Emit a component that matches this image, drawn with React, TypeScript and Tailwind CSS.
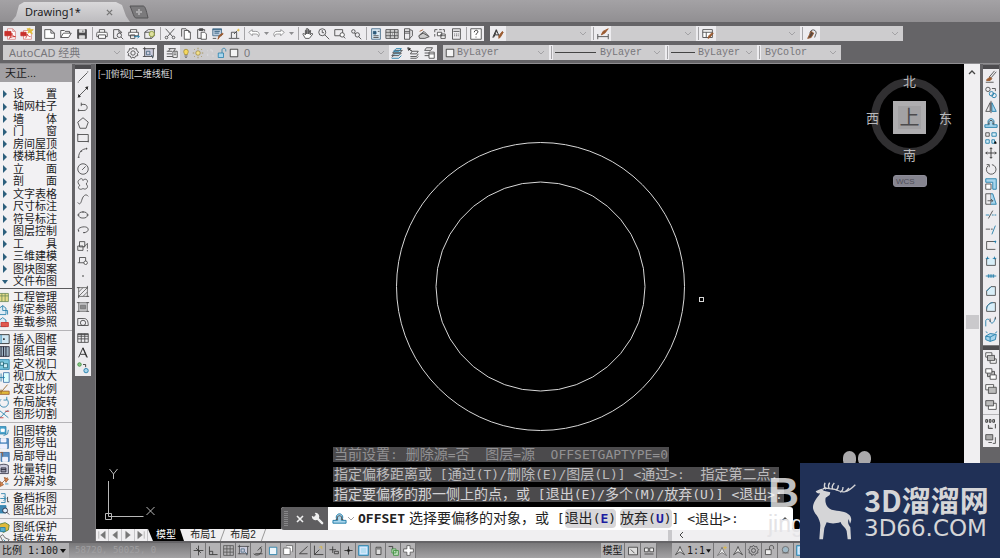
import type { ReactNode } from 'react'

// [path, stroke, fill]
type Shape = [string, string, string?]

const K = '#4a4a4c'
const B = '#1f7ba8'
const L = '#a8d5ec'
const R = '#c9302c'
const O = '#9a5a30'
const Y = '#e0b93a'
const N = 'none'

const ICONS: Record<string, Shape[]> = {
  pdf: [['M4 2h6l3 3v9H4zM10 2v3h3', '#d98a88', '#fff'], ['M1 5h7v5H1z', R, R], ['M6 13c2-2 3-4 3-6 0 3 2 4 4 4-2 0-5 0-7 2', R]],
  pdfStar: [['M4 4h6l3 3v7H4z', '#d98a88', '#fff'], ['M1 6h6v4H1z', R, R], ['M6 13c2-2 2-3 2-5 1 2 2 3 4 3', R], ['M11 1l1 2 3 0-2 2 1 3-3-2-2 1 1-3-2-2h2z', Y, Y]],
  file: [['M2 3h7l4 4v6H2zM9 3v4h4', K, '#fff']],
  open: [['M2 12V4h4l1 1h5v2M2 12l3-5h9l-3 5z', K, '#fff']],
  save: [['M3 3h10v10H3z', K, K], ['M5 3h6v3H5zM5 10h6v3H5z', '#ddd', '#ddd'], ['M9 4v2', K]],
  print: [['M5 6V3h6v3M3 6h10c1 0 1 1 1 2v3H2V8c0-1 0-2 1-2z', K, '#fff'], ['M4 9h8v4H4z', K, '#fff']],
  preview: [['M3 13V3h6l3 3v1M3 13h4M9 3v3h3', K], ['M7 9.500a2.500 2.500 0 1 0 5 0a2.500 2.500 0 1 0-5 0M11.500 11.500L14 14', K]],
  publish: [['M4 6V3h7v3M2 6h11v4H2zM4 9h5v4H4z', K, '#fff'], ['M8 11h6M12 9l2 2-2 2', B]],
  globe: [['M2 6l4-3h7v7l-3 3H2zM2 6h7v7', K], ['M7 8a3 3 0 1 0 6 0a3 3 0 1 0-6 0', '#8a9a3a', '#dfe0a0']],
  cut: [['M3 2l8 9M13 2L5 11M2.500 12a1.500 1.500 0 1 0 3 0a1.500 1.500 0 1 0-3 0M10.500 12a1.500 1.500 0 1 0 3 0a1.500 1.500 0 1 0-3 0', K]],
  copy: [['M3 11V2h5l2 2', K], ['M6 4h5l2 2v8H6zM11 4v2h2', K, '#fff']],
  paste: [['M8 13H3V3h8v2', K], ['M5 2h4v2H5z', K, K], ['M7 6h4l2 2v6H7z', K, '#fff']],
  match: [['M2 2h10v8H2z', '#4a6f8c', '#bcd'], ['M2 3h10M4 5h6M4 7h5', '#2d5a7a'], ['M14 8l-4 3-2 3 1-4 4-3z', O, O], ['M2 13h4', K]],
  block: [['M5 6h6v7H5zM2 13h3M11 13h3', K, '#eee'], ['M8 8l4-4', K], ['M13 2v3M11.500 3.500h3', Y]],
  undo: [['M2 6l4-3v2h4c3 0 4 2 4 4l-1 2c0-2-1-3-3-3H6v2z', '#8e8e90', '#fff']],
  redo: [['M14 6l-4-3v2H6C3 5 2 7 2 9l1 2c0-2 1-3 3-3h4v2z', '#8e8e90', '#fff']],
  pan: [['M5 13L2 8l1-1 2 2V4h1v4V2h2v6V3h1v5l1-4h1l-.5 5 2-2 1 1-4 5z', K, '#fff']],
  zoomRt: [['M2 6a4 4 0 1 0 8 0a4 4 0 1 0-8 0M6 3.500v3h2M9 9l5 5', K]],
  zoomWin: [['M2 3h9v7H2z', K], ['M8 9a2.500 2.500 0 1 0 5 0a2.500 2.500 0 1 0-5 0', K, '#fff'], ['M12 11l2 2', K]],
  zoomPrev: [['M3 5a2 2 0 1 0 4 0a2 2 0 1 0-4 0M7 9a2.500 2.500 0 1 0 5 0a2.500 2.500 0 1 0-5 0M6 7l2 1M11 11l3 3', K]],
  props: [['M3 2h10v12H3z', '#456c88', '#dcebf5'], ['M5 5h3v3H5z', '#2d5a7a', '#2d5a7a'], ['M10 5h2M5 10h6M5 12h6', K]],
  center: [['M1 3h14v10H1zM6 3v10M11 3v10M1 6h14M1 10h14M3 8h1M8 8h1M13 8h1', K, '#ddd']],
  palette: [['M4 2h6v12H4zM10 3l3 1v6l-3 3M4 5h6M4 7h6', K]],
  sheet: [['M2 10l5-3 7 4-5 2H3zM3 9l5-4 5 5', K, '#ccc'], ['M3 5l4-2', O]],
  markup: [['M2 3h3M7 3h3M2 3v3M2 8v3M13 6V3h-2', K], ['M5 6h5v4H5zM9 8h5v5H9z', K, '#fff'], ['M9 10h5', K]],
  calc: [['M4 2h9v12H4zM5 5h7M6 8h1M8 8h1M10 8h1M6 10h1M8 10h1M10 10h1', K]],
  help: [['M2 2h12v12H2z', K, '#fff'], ['M6 6c0-3 5-3 4 0 0 1-2 1-2 3M8 11v1', '#222']],
  textStyle: [['M2 12L6 3l4 9M4 9h4', '#222'], ['M3 12L6.500 4', '#222'], ['M14 6l-3 5-2 2v-3l4-5z', O, O]],
  dimStyle: [['M2 8v6M14 8v6M2 11h12', K], ['M14 2l-4 5-4 2 2-4z', O, O]],
  tableStyle: [['M2 3h11v9H2zM2 6h11M6 6v6', K, '#fff'], ['M14 7l-4 5-2 1 1-3 3-3z', O, O]],
  leader: [['M6 8a3.500 3.500 0 1 1 6 1l-1 3', K], ['M7 5l-4 8 4-1 3-5z', O, '#5b4a40']],
  gear: [['M8 1.500l1.500 2 2.500-.5.500 2.500 2 1.500-1.500 1.500.5 2.500-2.500.5L9.500 14 8 12.500 6 14l-1-2.500-2.500-.5.500-2.500L1.500 7l2-1.500L4 3l2.500.5z', K], ['M5.500 8a2.500 2.500 0 1 0 5 0a2.500 2.500 0 1 0-5 0', K]],
  workspace: [['M3 3h10v9H3zM1 3h3M12 3h3M3 1v3M1 12h3M12 14v-3', K, '#ccd'], ['M5 6h4v4H5zM10 10l3 3', '#4a6a80']],
  layers: [['M2 12h7M2 9h6M2 6h6M4 3h8l-2 3M4 6l2-3', K], ['M9 6h5v7H9zM10 8h3M10 10h3', K, '#fff']],
  bulb: [['M5 6a3 3 0 1 1 6 0c0 2-1 2-1 4H6c0-2-1-2-1-4', '#a08a30', '#f5d75c'], ['M6 12h4M7 14h2', K]],
  sun: [['M5 8a3 3 0 1 0 6 0a3 3 0 1 0-6 0M8 1v2M8 13v2M1 8h2M13 8h2M3 3l1 1M12 12l1 1M3 13l1-1M12 4l1-1', '#998540', '#f3e08a']],
  freeze: [['M8 4h3v3M5 9v3M4 5h1M11 12h2', '#e0e0e4']],
  lock: [['M3 8h7v6H3z', B, L], ['M8 8V4c0-3 5-3 5 0v2', B]],
  swatch: [['M3 3h10v10H3z', '#222', '#f4f4f4']],
  layCur: [['M2 11l3-3h8l-3 3zM2 13l3-3M3 8l3-3h8l-3 3z', K, L], ['M4 6l3-3h6l-3 3zM2 14h8l3-3', B]],
  layPrev: [['M2 2l3 1-2 2zM4 4l3 2', '#111'], ['M5 9l2-3h7l-2 3zM5 12h7l2-3M5 14h7l2-2', K]],
  layState: [['M3 5l2-3h7l-2 3zM3 8h6M3 11h5', K], ['M8 7h6v7H8zM8 9h6', K, '#fff']],
  line: [['M3 13L13 3M2 14h1M13 2h1', K]],
  xline: [['M2 14L14 2', K], ['M3 11l2 2-2 1zM11 3l2 2 0-3z', '#222', '#222']],
  pline: [['M2 12h7c5 0 5-7 0-7H6M6 3v4M3 10v3', K]],
  polygon: [['M8 2l6 5-2.500 7h-7L2 7z', K]],
  rect: [['M2 4h12v8H2zM2 3v2M14 11v2', K]],
  arc: [['M3 13C3 7 7 3 13 3M2 13h2M12 2v2M5 6h2', K]],
  circle: [['M2 8a6 6 0 1 0 12 0a6 6 0 1 0-12 0M7 9l4-4', K]],
  cloud: [['M4 3c2-2 4-1 4 1 2-3 6-1 5 2-2 1-1 3 0 4 1 3-3 5-5 3-2 2-6 1-5-2 2-1 1-2 0-3-1-2-1-4 1-5', K]],
  spline: [['M2 12c3 4 4-1 5-4s4-7 7-3', K]],
  ellipse: [['M3 8a5 3.500 0 1 0 10 0a5 3.500 0 1 0-10 0M1.500 8h2M12.500 8h2M8 3.500v2', K]],
  ellArc: [['M3 9C0 5 13 2 14 7c0 3-3 4-5 4M8 11h2M3 8v2', K]],
  insert: [['M4 3h6v6H4zM2 8h6v5H2zM9 9l4-4v6', K, '#eee'], ['M13 13v1', '#000']],
  make: [['M4 4h7v6H2M4 4v6', K], ['M9 10a2 2 0 1 0 4 0a2 2 0 1 0-4 0', K, '#fff']],
  point: [['M7.500 7.500h1v1h-1z', '#777', '#777']],
  hatch: [['M3 3h10v10H3zM3 8l5-5M3 13L13 3M8 13l5-5', '#666'], ['M1 3h3M12 13h3M3 12v3M13 1v3', K]],
  gradient: [['M3 3h10v10H3z', '#777', '#c4c4c6'], ['M5 6h6v4H5z', '#777', '#8a8a8c'], ['M1 3h3M12 3h3M1 13h3M12 13h3', K]],
  region: [['M2 12V4h7c3 0 5 2 5 8z', K], ['M5 9a3 3 0 1 0 6 0a3 3 0 1 0-6 0', K]],
  table: [['M2 3h12v10H2zM2 6h12M2 9h12M6 3v10M10 3v10', K], ['M2 4h12', K]],
  mtext: [['M3 13L8 2l5 11M5 9.500h6', '#222'], ['M8 2.500l4.200 10.500', '#222']],
  addSel: [['M2 4a2 2 0 1 0 4 0a2 2 0 1 0-4 0', '#3f8f3f', '#8bc78b'], ['M8 4h3v3', '#333'], ['M9 11a2.500 2.500 0 1 0 5 0a2.500 2.500 0 1 0-5 0', B, L]],
  erase: [['M14 2L8 9M12 1L6 8', K], ['M7 8l2 2-2 2H3l0-1z', O, O], ['M2 14h9', K]],
  copyObj: [['M2 5a2.500 2.500 0 1 0 5 0a2.500 2.500 0 1 0-5 0M9 4h4v3', K], ['M6 10a2.500 2.500 0 1 0 5 0a2.500 2.500 0 1 0-5 0M9 12a2.500 2.500 0 1 0 5 0a2.500 2.500 0 1 0-5 0', B]],
  mirror: [['M7 3v10H2z', K], ['M9 3v10h5z', B, L], ['M8 1v14', K]],
  offset: [['M1 10h5c-3-3-1-7 2-7s5 4 2 7h5v3H1z', B, L], ['M4 9h2c-1-2 0-4 2-4s3 2 2 4h2', K]],
  array: [['M2 2h4v4H2z', K], ['M9 2h5v4H9zM2 10h4v4H2zM9 10h3v4H9z', B, '#d8eef8'], ['M13 12l1 2h-2z', '#000', '#000']],
  move: [['M8 2v12M2 8h12M6.500 3.500L8 2l1.500 1.500M6.500 12.500L8 14l1.500-1.500M3.500 6.500L2 8l1.500 1.500M12.500 6.500L14 8l-1.500 1.500', '#333']],
  rotate: [['M9 3a5.500 5.500 0 1 1-4 1M3 3l3 0v3', K]],
  scale: [['M2 2h12v12h-4V6H2z', B, L], ['M2 8h6v6H2z', K, '#fff']],
  stretch: [['M2 2h6v12H2z', K], ['M8 2l2 0 4 12H8', B, L], ['M4 10h6M8 8l2 2-2 2', K]],
  trim: [['M2 8h4M9 8h2M12 8h2', B], ['M5 12l5-9', K]],
  extend: [['M2 7h5M8 7h2', K], ['M9 13l4-10', B]],
  breakPt: [['M13 4H3v9h10', K], ['M11 4h3M13 3v3', B]],
  breakObj: [['M3 5v8h10V5', K, '#d8eef8'], ['M2 5h4M10 5h4M4 3v3M12 3v3', B]],
  join: [['M2 8h12M5 6v4M7 6v4M9 6v4M11 6v4', B]],
  chamfer: [['M3 13V8l5-5h5v10z', K, '#d8eef8'], ['M3 8l5-5', B]],
  fillet: [['M3 13v-3c0-4 4-7 7-7h3v10z', K, '#d8eef8'], ['M3 10c0-4 4-7 7-7', B]],
  blend: [['M2 13V7c0-3 4-3 5 0s4 4 6-4', B], ['M7 4v4M13 2v3', K]],
  explode: [['M2 7l5-3 7 1-1 6-6 2-5-2zM7 8l6-3M7 8v5M7 8L2 7M4 3l-2-1M13 3l2-1', B, L]],
  front: [['M2 2h7v5H2z', K, '#fff'], ['M7 9h7v5H7z', K, '#fff'], ['M4 5h8v6H4z', K, '#bbb']],
  back: [['M4 5h8v6H4z', K, '#bbb'], ['M2 2h7v5H2zM7 9h7v5H7z', K, '#fff']],
  above: [['M2 3h9v6H2z', K, '#fff'], ['M5 6h9v7H5z', K, '#bbb']],
  under: [['M5 6h9v7H5z', K, '#fff'], ['M2 3h9v6H2z', K, '#bbb']],
  annFront: [['M2 3h2v3H2zM6 3h2v3H6zM10 3h2v3h-2zM5 9v4h5M13 8v5', '#333', '#ccc']],
  hatchBack: [['M2 3h8v6H2z', K, '#aaa'], ['M5 12h4M13 6v7h-3', K]],
  snap: [['M8 2v12M2 8h12M5 5l6 6', '#333']],
  grid: [['M2 2h12v12H2zM6 2v12M10 2v12M2 6h12M2 10h12', '#555']],
  ortho: [['M3 3v10h10M3 9h4v4', '#333']],
  polar: [['M2 12a5 5 0 1 0 8-8M7 8l5-5M4 12h9', '#333']],
  osnap: [['M3 4h9v9H3z', B, '#eef6fb']],
  osnap3: [['M2 5h8v8H2zM5 2h8v8', '#666', '#fff']],
  otrack: [['M13 3L3 12h10', '#333']],
  ducs: [['M3 2v11h11M3 13l6-6', '#333'], ['M9 4l3-1v3', Y]],
  dyn: [['M7 3v8M3 7h8M9 9h5v3H9z', '#333']],
  lwt: [['M8 3v10M3 8h10', '#222'], ['M7 7h2v2H7z', '#222', '#222']],
  tpy: [['M2 2h12v12H2z', B, '#8ecdf0'], ['M4 4h8v8H4z', '#eef', '#b6def3']],
  qp: [['M5 4h6v9H5zM6 6h4', '#333', '#ddd']],
  sc: [['M2 3h5v5', '#333'], ['M6 6h5v5H6zM8 8h6v6H8z', '#3f8f3f', '#bde0bd']],
  am: [['M6 2h4v4h4v4h-4v4H6v-4H2V6h4z', '#555', '#fff']],
  modelSp: [['M2 3h12v10H2zM5 6l5 5', '#333', '#ddd']],
  layoutSp: [['M2 4h5v5H2zM9 4h5v5H9zM2 12h12', '#333', '#eee']],
  annot: [['M8 2l2 5 4 6-6-4-6 4 4-6z', '#333', '#eee']],
  annotAdd: [['M8 3l2 5 4 6-6-4-6 4 4-6z', '#666', '#eee'], ['M12 1v5M9.500 3.500h5', Y]],
  unlock: [['M3 7h7v6H3z', '#444', '#eee'], ['M8 7V4c0-3 5-3 5 0v2', '#444']],
  iso: [['M4 7a4 4 0 1 0 8 0a4 4 0 1 0-8 0M4 11h8', '#666', '#9fb8c6']],
  proj: [['M2 3h12v10H2zM2 6h12M6 3v10M10 3v10', '#6c8a5a', '#e6dc8a']],
  bind: [['M3 13V5l4-3 4 3v8zM7 2v6h6v5', B, '#dcebf5']],
  reload: [['M3 13V5l4-3 4 3v8z', B, '#dcebf5'], ['M5 8h9v5H5z', R, '#e05a50']],
  frame: [['M1 2h14v11H1z', '#222', '#cfe6f2'], ['M8 7h1v1H8z', '#111', '#111'], ['M5 2v11', B]],
  catalog: [['M1 2h14v12H1z', '#223', '#9db1c0'], ['M5 2v12M8 2v12M11 2v12', '#112']],
  viewDef: [['M1 2h14v12H1z', B, '#7cc8de'], ['M4 5h4v4H4zM8 7h5v5H8z', '#267', '#cdeef8']],
  viewUp: [['M8 2h7v12H8z', '#3b6ea5', '#dff'], ['M2 8h7M7 6l2 2-2 2M5 3v10', B]],
  ratio: [['M3 10h12v4H3z', O, Y], ['M13 2L6 10M5 8v5', '#8a5a1a']],
  spin: [['M5 4a5.500 5.500 0 1 0 7 0M12 1v4h-4', B]],
  slice: [['M3 3l11 9M3 12c4-1 6-8 11-9', B], ['M3 12h5M10 4h5', R]],
  convert: [['M1 2h10v9H1z', B, '#4fa6cf'], ['M5 5h4v3H5z', '#fff', '#fff'], ['M8 13l5-2 1-5', B]],
  disk: [['M2 2h12v12H2z', '#3b6ea5', '#5b8fc4'], ['M5 2h6v4H5zM4 9h8v5H4z', '#fff', '#eef']],
  diskPart: [['M5 3h10v11H5z', '#3b6ea5', '#5b8fc4'], ['M7 9h6v5H7z', '#fff', '#eef'], ['M3 3h4v5', O]],
  batch: [['M2 3c4-2 9-2 12 0v10H2z', '#334', '#ccd'], ['M5 6h6v5H5zM5 8h6', '#223', '#99a']],
  split: [['M3 13L13 3', O], ['M4 8l4 4-4 2zM9 3l5 2-3 4z', O, '#e08a50'], ['M10 11h4', B]],
  backup: [['M5 2h5v11H5M4 8h6M8 5l3 3-3 3', B], ['M13 6v6h2', '#333']],
  compare: [['M3 2h8v9H3z', B, '#3f88b4'], ['M7 8a3 3 0 1 0 6 0a3 3 0 1 0-6 0M12 10l3 3', '#223', '#def']],
  protect: [['M3 4l7-2 5 3-1 6-6 3-5-3z', '#4d7a35', Y], ['M4 8h6v5H4z', B, '#59b0cc']],
  plugin: [['M4 4l3-2 3 4 5 2-4 6-4-4z', '#555', '#eee'], ['M8 8l4 4', B]],
}

function Icon({ name, className = 'size-4' }: { name: string; className?: string }) {
  return (
    <svg viewBox="0 0 16 16" className={`shrink-0 ${className}`} aria-hidden="true">
      {ICONS[name].map(([d, stroke, fill], i) => (
        <path key={i} d={d} stroke={stroke} fill={fill ?? N} strokeWidth={1} />
      ))}
    </svg>
  )
}

function Tool({ name, className = 'w-4' }: { name: string; className?: string }) {
  return (
    <button type="button" aria-label={name} className={`flex h-full shrink-0 items-center justify-center ${className}`}>
      <Icon name={name} className="size-[14px]" />
    </button>
  )
}

const Sep = () => <span className="ml-[2px] mr-px h-[13px] w-px shrink-0 bg-[#a5a4a7]" />

const Strip = ({ children }: { children: ReactNode }) => (
  <div className="flex h-full shrink-0 items-center bg-[#edecef]">{children}</div>
)

const Chevron = ({ className = '' }: { className?: string }) => (
  <svg viewBox="0 0 8 5" className={`h-[5px] w-2 ${className}`} aria-hidden="true">
    <path d="M1 1l3 3 3-3" stroke="#a3a2a5" fill="none" />
  </svg>
)

const Caret = () => (
  <svg viewBox="0 0 9 5" className="h-[5px] w-[9px]" aria-hidden="true">
    <path d="M2 1h5L4.500 4z" fill="#8e8e90" />
  </svg>
)

function Combo({ label, value = '', width, text = '', children }: { label: string; value?: string; width: string; text?: string; children?: ReactNode }) {
  return (
    <div className={`relative flex h-full shrink-0 items-center bg-[#cdccce] ${width}`}>
      {children}
      <select aria-label={label} className={`h-full min-w-0 flex-1 appearance-none bg-transparent text-[#77767a] outline-none ${text}`}>
        <option>{value}</option>
      </select>
      <Chevron className="pointer-events-none absolute right-1" />
    </div>
  )
}

const MONO = "font-['Liberation_Mono','Noto_Sans_CJK_SC',monospace] text-[10px]"

function TopTools() {
  const run = (names: string[]) => names.map((n) => <Tool key={n} name={n} />)
  return (
    <div className="flex h-[15px] items-center">
      <div className="ml-[3px] mr-[7px] flex h-full bg-[#edecef]">{run(['pdf', 'pdfStar'])}</div>
      <Strip>
        {run(['file', 'open', 'save'])}
        <Sep />
        {run(['print', 'preview', 'publish', 'globe'])}
        <Sep />
        {run(['cut', 'copy', 'paste', 'match', 'block'])}
        <Sep />
        <Tool name="undo" />
        <Caret />
        <Tool name="redo" />
        <Caret />
        <Sep />
        {run(['pan', 'zoomRt', 'zoomWin', 'zoomPrev'])}
        <Sep />
        {run(['props', 'center', 'palette', 'sheet', 'markup', 'calc'])}
        <Sep />
        <Tool name="help" />
      </Strip>
      <div className="ml-[6px] flex h-full">
        <Strip><Tool name="textStyle" /></Strip>
        <Combo label="文字样式" width="w-[85px]" />
        <Strip><Sep /><Tool name="dimStyle" /></Strip>
        <Combo label="标注样式" width="w-[85px]" />
        <Strip><Sep /><Tool name="tableStyle" /></Strip>
        <Combo label="表格样式" width="w-[84px]" />
        <Strip><Sep /><Tool name="leader" /></Strip>
        <Combo label="多重引线样式" width="w-[83px]" />
      </div>
    </div>
  )
}

function LayerTools() {
  return (
    <div className="flex h-[15px] items-center">
      <div className="ml-[3px] flex h-full">
        <Combo label="工作空间" value="AutoCAD 经典" width="w-[122px]" text="pl-[6px] text-[11px] font-['Noto_Sans','Noto_Sans_CJK_SC',sans-serif]" />
        <Strip><Tool name="gear" /><Tool name="workspace" /></Strip>
      </div>
      <div className="ml-[7px] flex h-full">
        <Strip><Tool name="layers" /></Strip>
        <Combo label="图层" value="0" width="w-[209px]" text="pl-1 text-[11px] font-['Liberation_Sans',sans-serif]">
          {['bulb', 'sun', 'freeze', 'lock', 'swatch'].map((n) => <Icon key={n} name={n} className="size-3" />)}
        </Combo>
        <Strip><Tool name="layCur" /><Tool name="layPrev" /><Tool name="layState" /></Strip>
      </div>
      <div className="ml-[6px] flex h-full">
        <Combo label="颜色" value="ByLayer" width="w-[106px]" text={MONO}>
          <Icon name="swatch" className="mx-px size-3" />
        </Combo>
        <Strip><Sep /></Strip>
        <Combo label="线型" value="ByLayer" width="w-[112px]" text={MONO}>
          <span className="ml-[2px] mr-1 h-px w-[41px] bg-[#444]" />
        </Combo>
        <Strip><Sep /></Strip>
        <Combo label="线宽" value="ByLayer" width="w-[88px]" text={MONO}>
          <span className="ml-[2px] mr-[3px] h-px w-[24px] bg-[#444]" />
        </Combo>
        <Strip><Sep /></Strip>
        <Combo label="打印样式" value="ByColor" width="w-[80px]" text={`pl-1 ${MONO}`} />
      </div>
    </div>
  )
}

const MENU = ['设置', '轴网柱子', '墙体', '门窗', '房间屋顶', '楼梯其他', '立面', '剖面', '文字表格', '尺寸标注', '符号标注', '图层控制', '工具', '三维建模', '图块图案', '文件布图']

const GROUPS: { height: string; items: [string, string][] }[] = [
  { height: 'h-[38px]', items: [['proj', '工程管理'], ['bind', '绑定参照'], ['reload', '重载参照']] },
  { height: 'h-[88px]', items: [['frame', '插入图框'], ['catalog', '图纸目录'], ['viewDef', '定义视口'], ['viewUp', '视口放大'], ['ratio', '改变比例'], ['spin', '布局旋转'], ['slice', '图形切割']] },
  { height: 'h-[63px]', items: [['convert', '旧图转换'], ['disk', '图形导出'], ['diskPart', '局部导出'], ['batch', '批量转旧'], ['split', '分解对象']] },
  { height: 'h-[25px]', items: [['backup', '备档拆图'], ['compare', '图纸比对']] },
  { height: 'h-[25px]', items: [['protect', '图纸保护'], ['plugin', '插件发布']] },
]

function TangentPanel() {
  return (
    <aside className="w-[72px] shrink-0 overflow-hidden bg-[#f2f1f3] text-[11px] leading-none text-[#1c1c1e]">
      <h2 className="h-[18px] bg-[#a2a0a3] pl-[5px] text-[11px] leading-[18px]">天正...</h2>
      <div className="mt-[6px] grid h-[201px] auto-rows-fr border-b border-[#5a5a5c]">
        {MENU.map((m, i) => (
          <button key={m} type="button" className="flex items-center">
            <svg viewBox="0 0 8 8" className="ml-px mr-1 size-2" aria-hidden="true">
              <path d={i === MENU.length - 1 ? 'M1 2h6L4 6z' : 'M2 0v8l4-4z'} fill="#2c5f7c" />
            </svg>
            <span className="flex w-11 justify-between">{[...m].map((c, j) => <span key={j}>{c}</span>)}</span>
          </button>
        ))}
      </div>
      {GROUPS.map((g, i) => (
        <div key={i} className="border-b border-[#b5b4b7] pb-px pt-[2px]">
          <div className={`grid auto-rows-fr ${g.height}`}>
            {g.items.map(([icon, label]) => (
              <button key={label} type="button" className="flex min-h-0 items-center gap-[3px]">
                <Icon name={icon} className="-ml-[3px] size-[13px]" />
                {label}
              </button>
            ))}
          </div>
        </div>
      ))}
    </aside>
  )
}

const DRAW = ['line', 'xline', 'pline', 'polygon', 'rect', 'arc', 'circle', 'cloud', 'spline', 'ellipse', 'ellArc', 'insert', 'make', 'point', 'hatch', 'gradient', 'region', 'table', 'mtext', 'addSel']
const MODIFY = ['erase', 'copyObj', 'mirror', 'offset', 'array', 'move', 'rotate', 'scale', 'stretch', 'trim', 'extend', 'breakPt', 'breakObj', 'join', 'chamfer', 'fillet', 'blend', 'explode']

function VerticalTools({ names, height }: { names: string[]; height: string }) {
  return (
    <div className={`grid auto-rows-fr bg-[#edecef] ${height}`}>
      {names.map((n) => <Tool key={n} name={n} className="min-h-0 w-full" />)}
    </div>
  )
}

const Grip = () => <div className="h-[5px] border-t border-[#7b7a7d] bg-[#4d4c4f]" />

// CAD draws circles as short chords, so the shapes are faceted polygons
const chords = (r: number, n: number) =>
  Array.from({ length: n }, (_, i) => {
    const a = (i / n) * Math.PI * 2
    return `${144.5 + r * Math.cos(a)},${144.5 + r * Math.sin(a)}`
  }).join(' ')

function ViewCube() {
  const side = 'absolute text-[13px] leading-none'
  return (
    <div className="absolute right-[11px] top-[10px] size-[86px] text-[#b9b9bb]">
      <div className="absolute left-1 top-1 size-[78px] rounded-full border-8 border-[#302f31]" />
      <span className={`${side} left-[36px] top-px`}>北</span>
      <span className={`${side} left-[36px] top-[75px]`}>南</span>
      <span className={`${side} -left-px top-[38px]`}>西</span>
      <span className={`${side} left-[72px] top-[38px]`}>东</span>
      <button type="button" className="absolute left-[26px] top-[27px] size-[33px] border-[5px] border-[#aeadaf] bg-[#a3a2a4] text-[20px] leading-none text-[#4c4b4d]">
        <span className="-mx-1 block">上</span>
      </button>
      <button type="button" className="absolute left-[26px] top-[101px] h-3 w-[34px] rounded-[3px] border border-[#8d8c98] bg-[#85848f] pl-[2px] text-left font-['Liberation_Sans',sans-serif] text-[8px] leading-[9px] text-[#4f4e58]">WCS</button>
    </div>
  )
}

// Chinese glyphs are a step larger than the console's latin face
function Mixed({ children }: { children: string }) {
  return children.split(/([\x20-\x7e]+)/).map((part, i) =>
    i % 2 ? <span key={i} className="text-[13px]">{part}</span> : part
  )
}

function CommandLine() {
  const line = 'mb-[5px] h-[15px] w-fit whitespace-pre bg-[#4b4a4c] px-px leading-[15px]'
  return (
    <div className="absolute bottom-[11px] left-[185px] w-[512px] font-['DejaVu_Sans_Mono','Noto_Sans_CJK_SC',monospace] text-[14px]">
      <div className="pl-[52px]">
        <p className={`${line} text-[#929193]`}><Mixed>{'当前设置: 删除源=否  图层=源  OFFSETGAPTYPE=0'}</Mixed></p>
        <p className={`${line} text-[#bcbbbd]`}><Mixed>{'指定偏移距离或 [通过(T)/删除(E)/图层(L)] <通过>:  指定第二点:'}</Mixed></p>
        <p className={`${line} text-[#d4d3d5]`}><Mixed>{'指定要偏移的那一侧上的点，或 [退出(E)/多个(M)/放弃(U)] <退出>:'}</Mixed></p>
      </div>
      <div className="flex h-[23px] items-center overflow-hidden rounded-[3px] bg-white leading-[18px] text-[#222]">
        <div className="flex h-full w-[47px] shrink-0 items-center justify-between bg-[#5f5e60] pl-[3px] pr-1">
          <svg viewBox="0 0 4 16" className="h-4 w-1" aria-hidden="true">
            <path d="M1 0v16M3 0v16" stroke="#b0afb1" strokeDasharray="1 1" />
          </svg>
          <button type="button" aria-label="关闭">
            <svg viewBox="0 0 8 8" className="size-2"><path d="M1 1l6 6M7 1L1 7" stroke="#f0f0f0" strokeWidth="1.600" /></svg>
          </button>
          <button type="button" aria-label="自定义">
            <svg viewBox="0 0 14 14" className="size-[13px]">
              <path d="M5 5l7 7" stroke="#eee" strokeWidth="2.600" strokeLinecap="round" />
              <path d="M4 1a4 4 0 1 1-3 3l2.500 1.500L5.500 3.500z" fill="#eee" />
            </svg>
          </button>
        </div>
        <Icon name="offset" className="ml-1 size-[15px]" />
        <Chevron />
        <div className="ml-[3px] flex shrink-0 items-center whitespace-pre">
          <b className="text-[13px]">OFFSET</b>
          <span className="ml-1"><Mixed>{'选择要偏移的对象，或 ['}</Mixed></span>
          <button type="button" className="rounded-sm bg-[#d8d7d9]">退出<span className="text-[13px]">(<b className="text-[#1c1ca0]">E</b>)</span></button>
          <button type="button" className="ml-1 rounded-sm bg-[#d8d7d9]">放弃<span className="text-[13px]">(<b className="text-[#1c1ca0]">U</b>)</span></button>
          <Mixed>{'] <退出>:'}</Mixed>
        </div>
        <input aria-label="命令" className="min-w-0 flex-1 bg-transparent outline-none" />
        <svg viewBox="0 0 8 5" className="mr-1 h-[5px] w-2" aria-hidden="true"><path d="M1 4l3-3 3 3z" fill="#555" /></svg>
      </div>
    </div>
  )
}

function LayoutTabs() {
  const nav = ['M3 2v8M10 2L5 6l5 4z', 'M9 2L4 6l5 4z', 'M4 2l5 4-5 4z', 'M10 2v8M3 2l5 4-5 4z']
  return (
    <div className="flex h-3 shrink-0 items-center bg-[#f0eff1] text-[10px] leading-3">
      {nav.map((d) => (
        <button key={d} type="button" aria-label="切换布局" className="h-3 w-[13px] border-r border-[#c5c4c7]">
          <svg viewBox="0 0 13 12" className="h-3 w-3"><path d={d} fill="#777" stroke="#777" strokeWidth=".5" /></svg>
        </button>
      ))}
      <button type="button" className="h-3 w-9 bg-black text-white [clip-path:polygon(0_0,32px_0,100%_100%,5px_100%)]">模型</button>
      <button type="button" className="h-3 w-[38px] text-[#222]">布局1</button>
      <span className="h-3 w-px -skew-x-[20deg] bg-[#999]" />
      <button type="button" className="h-3 w-10 text-[#222]">布局2</button>
      <span className="h-3 w-px -skew-x-[20deg] bg-[#999]" />
      <span className="ml-auto mr-[2px] h-3 w-1 bg-[#c9c8cb]" />
      <div className="w-[290px] pl-1">
        <svg viewBox="0 0 6 8" className="h-2 w-[6px]" aria-hidden="true"><path d="M5 1L2 4l3 3" stroke="#444" fill="none" /></svg>
      </div>
    </div>
  )
}

function Drawing() {
  return (
    <main className="relative flex min-w-0 flex-1 flex-col border-l border-[#79787a]">
      <div className="relative flex-1 overflow-hidden bg-black">
        <p className="absolute left-[2px] top-1 text-[9px] leading-3 text-[#d6d6d8]">[−][俯视][二维线框]</p>
        <svg viewBox="0 0 289 289" className="absolute left-[300px] top-[78px] size-[289px]" aria-hidden="true">
          <polygon points={chords(144, 72)} fill="none" stroke="#d8d8d8" />
          <polygon points={chords(104.500, 36)} fill="none" stroke="#d8d8d8" />
        </svg>
        <span className="absolute left-[603px] top-[233px] size-[5px] border border-[#d8d8d8]" />
        <svg viewBox="0 0 60 56" className="absolute bottom-[9px] left-[8px] h-[56px] w-[60px]" aria-hidden="true">
          <path d="M4.500 17v35.500h35M1.500 49.500h6v6h-6zM5.500 5l4 5 4-5M9.500 10v5M42.500 43l8 8M50.500 43l-8 8" stroke="#b8b8b8" fill="none" />
        </svg>
        <ViewCube />
      </div>
      <LayoutTabs />
      <CommandLine />
    </main>
  )
}

const TOGGLES = ['snap', 'ortho', 'grid', 'workspace', 'polar', 'osnap', 'osnap3', 'otrack', 'ducs', 'dyn', 'lwt', 'tpy', 'qp', 'sc', 'am']

function StatusBar() {
  const cell = 'flex h-full items-center justify-center border-r border-[#767577] bg-[#b4b3b5]'
  return (
    <footer className="flex h-[15px] shrink-0 items-center bg-linear-to-b from-[#79787a] to-[#a3a2a4] text-[11px] leading-[15px] text-[#1a1a1a]">
      <div className="flex h-full w-[69px] items-center bg-[#b1b0b2] pl-[2px]">
        <button type="button" className="flex items-center font-['DejaVu_Sans_Mono','Noto_Sans_CJK_SC',monospace] text-[10px]">
          比例 1:100
          <svg viewBox="0 0 6 4" className="ml-[2px] h-1 w-[6px]"><path d="M0 0h6L3 4z" fill="#111" /></svg>
        </button>
      </div>
      <span className="w-[121px] pl-[6px] font-['DejaVu_Sans_Mono',monospace] text-[9px] text-[#a09fa1]">58720, 50025, 0</span>
      <div className="flex h-full border-l border-[#767577]">
        {TOGGLES.map((n) => (
          <button key={n} type="button" aria-label={n} className={`${cell} w-[15px]`}><Icon name={n} className="size-[13px]" /></button>
        ))}
      </div>
      <div className="ml-auto mr-[190px] flex h-full">
        <button type="button" className={`${cell} w-6 text-[10px]`}>模型</button>
        <button type="button" aria-label="模型空间" className={`${cell} w-4`}><Icon name="modelSp" className="size-3" /></button>
        <button type="button" aria-label="布局空间" className={`${cell} w-4`}><Icon name="layoutSp" className="size-3" /></button>
        <button type="button" className={`${cell} ml-[15px] w-[42px] gap-px font-['DejaVu_Sans_Mono',monospace] text-[10px]`}>
          <Icon name="annot" className="size-3" />1:1
          <svg viewBox="0 0 6 4" className="h-1 w-[5px]"><path d="M0 0h6L3 4z" fill="#111" /></svg>
        </button>
        {['annotAdd', 'annot'].map((n) => <button key={n} type="button" aria-label={n} className={`${cell} w-4`}><Icon name={n} className="size-3" /></button>)}
        {['gear', 'unlock', 'iso', 'tpy'].map((n) => <button key={n} type="button" aria-label={n} className={`${cell} w-4`}><Icon name={n} className="size-[13px]" /></button>)}
      </div>
    </footer>
  )
}

function SiteLogo() {
  return (
    <div className="absolute bottom-0 right-0 flex h-[95px] w-[200px] items-center bg-[#203056] pl-3 text-[#d5d5d7]">
      <svg viewBox="155 122 135 180" className="h-[60px] w-[45px] shrink-0" aria-hidden="true">
        <path d="M166 153l13-6 6-2 5 6 20 5-2 8-12 8c-3 14 2 29 18 36 20 5 43 3 54 17 7 9 5 18 1 25l-4-14c-4 12 0 18 5 25l2 36h-10l-3-25c-4-12-16-17-18-27-17 6-30 5-42 1l-7 17-4 34h-11l3-42c0-10-5-21-11-30-12-15-15-26-5-44 6-10 14-17 15-22-5 1-10 0-13-6z" fill="currentColor" />
        <path d="M187 147c4-7 18-2 30-1 14 0 21 12 37 8 12-2 22-12 31-21M196 147c-5-7-5-13-2-20M207 146c-4-7-4-12 1-19M218 147c-5-7-3-12 4-19M226 150c6-3 8-8 8-15M239 155c7-2 9-8 9-15M252 155c7-3 10-7 14-12" fill="none" stroke="currentColor" strokeWidth="4" />
      </svg>
      <div className="ml-[7px] whitespace-nowrap">
        <div className="font-['Noto_Sans_CJK_SC',sans-serif] text-[29px] font-bold leading-[34px]">3D溜溜网</div>
        <div className="font-['DejaVu_Sans',sans-serif] text-[23px] leading-6">3D66.COM</div>
      </div>
    </div>
  )
}

export default function App() {
  return (
    <div className="relative flex h-screen flex-col overflow-hidden bg-[#656467] font-['Liberation_Sans','Noto_Sans_CJK_SC',sans-serif]">
      <header className="flex h-[22px] shrink-0 items-end bg-linear-to-b from-[#a4a2a5] to-[#918f92] pl-[11px]">
        <div className="flex h-5 w-[119px] items-center justify-between bg-linear-to-b from-[#d9d8da] to-[#bdbcbf] pl-[14px] pr-[17px] [clip-path:polygon(0_100%,5px_70%,8px_15%,13px_0,105px_0,111px_15%,115px_70%,100%_100%)]">
          <span className="font-['Noto_Sans',sans-serif] text-[11px] leading-5 text-[#1c1c1e]">Drawing1*</span>
          <button type="button" aria-label="关闭图形"><svg viewBox="0 0 8 8" className="size-[7px]"><path d="M1 1l6 6M7 1L1 7" stroke="#777" strokeWidth="1.500" /></svg></button>
        </div>
        <button type="button" aria-label="新图形" className="mb-[3px] -ml-px">
          <svg viewBox="0 0 20 14" className="h-[14px] w-5">
            <path d="M2 1h12c2 0 3 3 5 12H7C5 13 4 8 1 1z" fill="#7b7a7c" stroke="#555456" />
            <path d="M10 4v6M7 7h6" stroke="#aaa9ab" strokeWidth="2" />
          </svg>
        </button>
      </header>
      <div className="flex h-[42px] shrink-0 flex-col gap-1 border-b border-[#8f8e91] bg-[#656467] pt-1">
        <TopTools />
        <LayerTools />
      </div>
      <div className="flex min-h-0 flex-1">
        <TangentPanel />
        <div className="ml-[3px] mr-1 w-4 shrink-0">
          <Grip />
          <VerticalTools names={DRAW} height="h-[307px]" />
        </div>
        <Drawing />
        <div className="flex w-4 shrink-0 flex-col items-center bg-[#f0eff1] pt-[6px]">
          <svg viewBox="0 0 8 5" className="h-[5px] w-2" aria-hidden="true"><path d="M1 4l3-3 3 3" stroke="#444" strokeWidth="1.300" fill="none" /></svg>
          <span className="mt-[240px] h-[14px] w-[13px] bg-[#cac9cc]" />
        </div>
        <div className="ml-[3px] mr-px w-4 shrink-0">
          <Grip />
          <VerticalTools names={MODIFY} height="h-[276px]" />
          <Grip />
          <VerticalTools names={['front', 'back', 'above', 'under']} height="h-[63px]" />
          <div className="bg-[#edecef] py-px"><hr className="border-[#b5b4b7]" /></div>
          <VerticalTools names={['annFront', 'hatchBack']} height="h-[31px]" />
        </div>
      </div>
      <div className="h-[2px] shrink-0" />
      <StatusBar />
      <div className="pointer-events-none absolute bottom-[22px] right-[182px] w-[50px] font-['Liberation_Sans',sans-serif] text-white" aria-hidden="true">
        <p className="text-[43px] font-bold leading-10 opacity-75">Ba</p>
        <p className="text-[23px] leading-6 text-[#e4e3e6]">jing</p>
      </div>
      <div className="absolute bottom-[91px] right-[129px] flex gap-[2px]" aria-hidden="true">
        <span className="h-4 w-[13px] rounded-full bg-[#aaa9ab]" />
        <span className="h-[15px] w-[13px] rounded-full bg-[#aaa9ab]" />
      </div>
      <SiteLogo />
    </div>
  )
}
